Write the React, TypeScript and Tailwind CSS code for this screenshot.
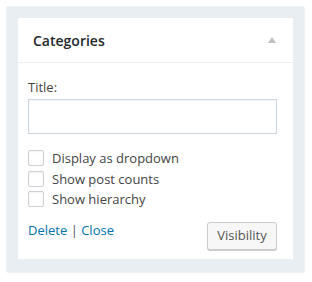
import React from "react";

const font = { fontFamily: '"Open Sans", "Noto Sans", sans-serif' };

function Check({ label }: { label: string }) {
  return (
    <label className="flex h-[20.5px] items-center">
      <span className="box-border h-[16px] w-[16px] rounded-[2px] border border-[#cdd1d5] bg-white shadow-[inset_0_1px_2px_rgba(0,0,0,0.05)]" />
      <span className="ml-[8px] text-[13px] leading-[18px] text-[#444]">{label}</span>
    </label>
  );
}

export default function App() {
  return (
    <div className="h-[282px] w-[312px] bg-white pl-[6px] pt-[6px]" style={font}>
      <div className="box-border h-[267px] w-[299px] rounded-[2px] border border-[#f0f3f6] bg-[#e9eef2] px-[11px] pt-[11px]">
        <div className="flex h-[241px] w-[275px] flex-col bg-white">
          <div className="flex h-[45px] items-center justify-between border-b border-[#eceeef] pl-[15px] pr-[17px]">
            <span className="text-[14px] font-semibold text-[#23282d]">Categories</span>
            <svg width="8" height="6" viewBox="0 0 8 6">
              <path d="M4 0 L8 6 L0 6 Z" fill="#bcc1c5" />
            </svg>
          </div>
          <div className="flex flex-1 flex-col pl-[10px] pr-[16px] pt-[15px]">
            <div className="text-[13px] leading-[18px] text-[#444]">Title:</div>
            <div className="mt-[3px] box-border h-[35px] w-full border border-[#cbd5dc] bg-white shadow-[inset_0_1px_2px_rgba(0,0,0,0.04)]" />
            <div className="mt-[14px] flex flex-col">
              <Check label="Display as dropdown" />
              <Check label="Show post counts" />
              <Check label="Show hierarchy" />
            </div>
            <div className="mt-[11px] flex items-start justify-between">
              <div className="text-[13px] leading-[18px]">
                <span className="text-[#0073aa]">Delete</span>
                <span className="text-[#555]"> | </span>
                <span className="text-[#0073aa]">Close</span>
              </div>
              <div className="mt-[1px] box-border flex h-[28px] w-[70px] items-center justify-center rounded-[3px] border border-[#cccccc] bg-[#f7f7f7] text-[13px] text-[#555] shadow-[0_1px_0_#cccccc]">
                Visibility
              </div>
            </div>
          </div>
        </div>
      </div>
    </div>
  );
}
